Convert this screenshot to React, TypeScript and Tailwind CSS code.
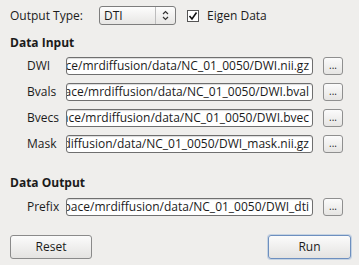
import React from "react";

const font = { fontFamily: '"Open Sans", "Noto Sans", sans-serif' };

function PathField({ value }: { value: string }) {
  return (
    <div className="flex h-[18px] w-[247px] items-center justify-end overflow-hidden rounded-[3px] border border-[#6f6f6f] bg-white pr-[3px] shadow-[inset_0_1px_1px_rgba(0,0,0,0.15)]">
      <span className="whitespace-nowrap text-[12px] leading-none text-[#1b1b1b]">{value}</span>
    </div>
  );
}

function Browse() {
  return (
    <div className="ml-[10px] flex h-[18px] w-[20px] items-center justify-center rounded-[3px] border border-[#8f8f8f] bg-gradient-to-b from-[#fbfbfb] to-[#e6e5e3] text-[10px] leading-none text-[#222]">
      <span className="-mt-[3px]">...</span>
    </div>
  );
}

function Row({ label, value }: { label: string; value: string }) {
  return (
    <div className="flex h-[18px] items-center pl-[27px]">
      <div className="w-[39px] text-[12px] leading-none text-[#1b1b1b]">{label}</div>
      <PathField value={value} />
      <Browse />
    </div>
  );
}

export default function App() {
  const base = "/home/user/workspace/mrdiffusion/data/NC_01_0050/";
  return (
    <div style={font} className="flex h-[265px] w-[359px] flex-col bg-[#efeeec] text-[#1b1b1b]">
      <div className="mt-[6px] flex h-[19px] items-center pl-[10px]">
        <div className="w-[89px] text-[12px] leading-none">Output Type:</div>
        <div className="flex h-[19px] w-[77px] items-center rounded-[3px] border border-[#7d7d7d] bg-gradient-to-b from-[#fdfdfd] to-[#e7e6e4]">
          <span className="flex-1 pl-[4px] text-[12px] leading-none">DTI</span>
          <div className="flex h-full w-[20px] items-center justify-center border-l border-[#bdbdbd]">
            <svg width="7" height="11" viewBox="0 0 7 11">
              <path d="M1 4 L3.5 1.5 L6 4 M1 7 L3.5 9.5 L6 7" fill="none" stroke="#333" strokeWidth="1.2" />
            </svg>
          </div>
        </div>
        <div className="ml-[11px] flex h-[12px] w-[12px] items-center justify-center border border-[#555] bg-white">
          <svg width="10" height="10" viewBox="0 0 10 10">
            <path d="M1.5 5 L4 8 L8.5 1.5" fill="none" stroke="#111" strokeWidth="1.6" />
          </svg>
        </div>
        <span className="ml-[8px] text-[12px] leading-none">Eigen Data</span>
      </div>

      <div className="mt-[11px] pl-[10px] text-[12px] font-bold leading-[14px]">Data Input</div>

      <div className="mt-[7px] flex flex-col gap-[8px]">
        <Row label="DWI" value={base + "DWI.nii.gz"} />
        <Row label="Bvals" value={base + "DWI.bval"} />
        <Row label="Bvecs" value={base + "DWI.bvec"} />
        <Row label="Mask" value={base + "DWI_mask.nii.gz"} />
      </div>

      <div className="mt-[23px] pl-[10px] text-[12px] font-bold leading-[14px]">Data Output</div>

      <div className="mt-[8px]">
        <Row label="Prefix" value={base + "DWI_dti"} />
      </div>

      <div className="mt-[19px] flex items-center justify-between pl-[10px] pr-[8px]">
        <div className="flex h-[24px] w-[82px] items-center justify-center rounded-[3px] border border-[#8a8a8a] bg-gradient-to-b from-[#fbfbfb] to-[#e4e3e1] text-[12px] leading-none">
          Reset
        </div>
        <div className="flex h-[24px] w-[83px] items-center justify-center rounded-[3px] border border-[#6d8fbf] bg-gradient-to-b from-[#fbfbfb] to-[#e4e3e1] text-[12px] leading-none shadow-[0_0_0_1px_rgba(120,160,210,0.35)]">
          Run
        </div>
      </div>
    </div>
  );
}
